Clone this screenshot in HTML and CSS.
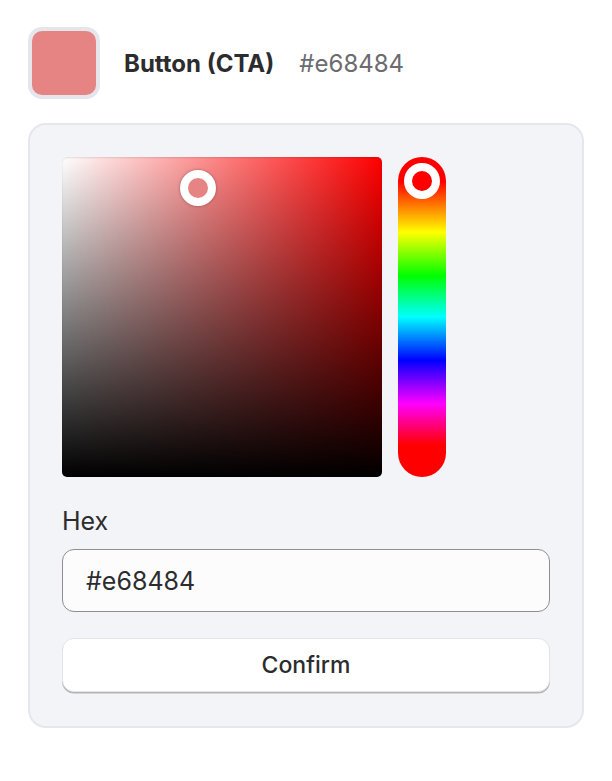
FILE: index.html
```html
<!DOCTYPE html>
<html lang="en">
<head>
<meta charset="utf-8">
<title>Color picker</title>
<link rel="stylesheet" href="styles.css">
</head>
<body>
<div class="page">
  <div class="header">
    <div class="swatch"><div class="swatch-fill"></div></div>
    <div class="title">Button (CTA)</div>
    <div class="hex-value">#e68484</div>
  </div>
  <div class="card">
    <div class="picker">
      <div class="sat-area">
        <div class="sat-thumb" style="left: 42.6%; top: 9.8%;"></div>
      </div>
      <div class="hue-bar">
        <div class="hue-thumb"></div>
      </div>
    </div>
    <label class="field-label" for="hex">Hex</label>
    <input class="hex-input" id="hex" type="text" value="#e68484">
    <button class="confirm" type="button">Confirm</button>
  </div>
</div>
</body>
</html>
```
FILE: styles.css
```css
* { box-sizing: border-box; }
html, body { margin: 0; padding: 0; background: #ffffff; }
body {
  font-family: Inter, "Noto Sans", "Liberation Sans", sans-serif;
  color: #2c2c2e;
}
.page {
  padding: 27px 28px;
  width: 612px;
}
.header {
  display: flex;
  align-items: center;
}
.swatch {
  width: 72px;
  height: 72px;
  border-radius: 14px;
  background: #e5e6eb;
  padding: 4px;
  flex: none;
}
.swatch-fill {
  width: 100%;
  height: 100%;
  border-radius: 10px;
  background: #e68484;
}
.title {
  margin-left: 24px;
  font-size: 24px;
  font-weight: 700;
  color: #2c2c2e;
}
.hex-value {
  margin-left: 25px;
  font-size: 24px;
  color: #6b6b70;
}
.card {
  margin-top: 24px;
  width: 556px;
  background: #f3f4f8;
  border: 2px solid #e6e7ec;
  border-radius: 18px;
  padding: 32px 32px 34px;
  display: flex;
  flex-direction: column;
}
.picker {
  display: flex;
  gap: 16px;
}
.sat-area {
  position: relative;
  width: 320px;
  height: 320px;
  border-radius: 5px;
  background:
    linear-gradient(to top, #000 0%, rgba(0,0,0,0) 100%),
    linear-gradient(to right, #fff 0%, #ff0000 100%);
  box-shadow: inset 0 1px 2px rgba(0,0,0,0.12);
}
.sat-thumb {
  position: absolute;
  width: 36px;
  height: 36px;
  margin: -18px 0 0 -18px;
  border-radius: 50%;
  border: 8px solid #ffffff;
  background: #e68484;
  box-shadow: 0 0 3px rgba(0,0,0,0.35);
}
.hue-bar {
  position: relative;
  width: 48px;
  height: 320px;
  border-radius: 24px;
  background: linear-gradient(to bottom,
    #ff0000 24px,
    #ffff00 calc(30px + (100% - 48px) / 6),
    #00ff00 calc(28px + (100% - 48px) * 2 / 6),
    #00ffff calc(24px + (100% - 48px) * 3 / 6),
    #0000ff calc(22px + (100% - 48px) * 4 / 6),
    #ff00ff calc(20px + (100% - 48px) * 5 / 6),
    #ff0000 calc(100% - 32px));
}
.hue-thumb {
  position: absolute;
  left: 6px;
  top: 6px;
  width: 36px;
  height: 36px;
  border-radius: 50%;
  border: 8px solid #ffffff;
  background: #ff0000;
}
.field-label {
  margin-top: 30px;
  font-size: 25px;
  line-height: 28px;
  color: #2c2c2e;
}
.hex-input {
  margin-top: 14px;
  width: 100%;
  height: 63px;
  border: 1px solid #8e8e93;
  border-radius: 12px;
  background: #fcfcfd;
  padding: 0 23px;
  font-family: inherit;
  font-size: 25px;
  color: #2c2c2e;
  outline: none;
}
.confirm {
  margin-top: 26px;
  width: 100%;
  height: 54px;
  border: 1px solid #e3e4e8;
  border-radius: 12px;
  background: #ffffff;
  box-shadow: 0 1.5px 0 #b4b4b8;
  font-family: inherit;
  font-size: 23px;
  font-weight: 500;
  color: #2c2c2e;
}
```
